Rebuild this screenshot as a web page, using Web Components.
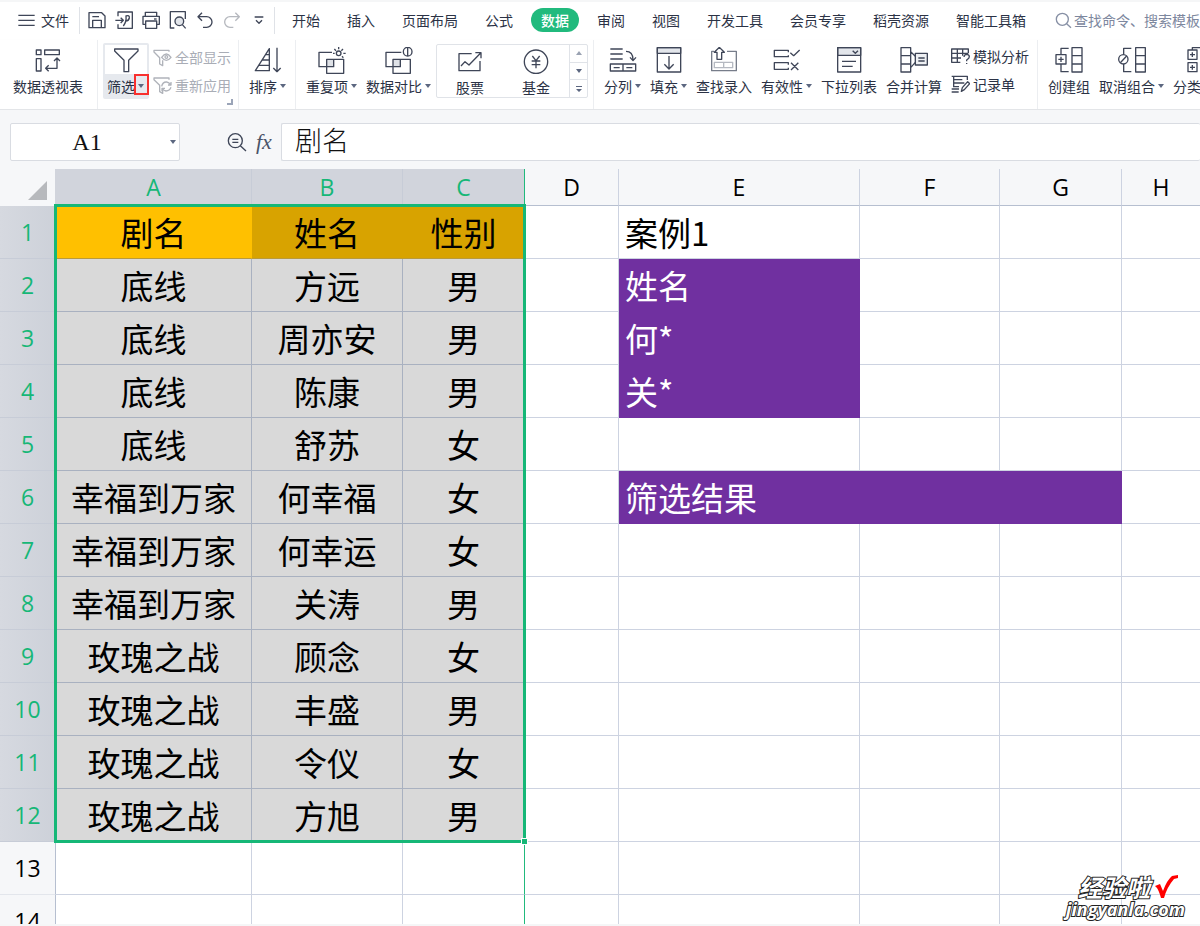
<!DOCTYPE html>
<html lang="zh-CN">
<head>
<meta charset="utf-8">
<title>表格</title>
<style>
  html, body { margin: 0; height: 100%; }
  body { font-family: "Noto Sans CJK SC", sans-serif; font-weight: 400; overflow: hidden; }
</style>
</head>
<body>
<sheet-app></sheet-app>

<template id="t-app">
<style>
  :host { display: flex; flex-direction: column; height: 100vh; overflow: hidden; background: #f5f6f7; color: #2b3245; position: relative; }
  main { flex: 1; min-height: 0; overflow: hidden; margin-bottom: 2px; }
</style>
<menu-bar></menu-bar>
<tool-ribbon></tool-ribbon>
<formula-bar></formula-bar>
<main><sheet-grid></sheet-grid></main>
<site-mark></site-mark>
</template>

<template id="t-menu">
<style>
  :host { display: flex; align-items: center; height: 36px; padding-bottom: 2px; margin-top: 2px; background: #fff; font-size: 14px; line-height: 20px; white-space: nowrap; overflow: hidden; }
  button { font: inherit; color: inherit; background: none; border: 0; padding: 0; display: flex; align-items: center; flex: none; }
  .file { gap: 6px; margin-left: 17px; }
  .sep { width: 1px; height: 27px; background: #dfe2e7; flex: none; }
  .quick { display: flex; gap: 7px; margin: 0 5px 0 7px; }
  .file + .sep { margin-left: 10px; }
  nav { display: flex; gap: 7px; margin-left: 7px; }
  nav a { color: inherit; text-decoration: none; padding: 2px 10px; border-radius: 12px; }
  nav a.on { background: #21ba7d; color: #fff; font-weight: 500; margin: 0 1px; }
  .find { display: flex; align-items: center; gap: 2px; margin-left: 18px; flex: 1; color: #7d879e; }
  .find input { font: inherit; color: inherit; border: 0; padding: 0; outline: 0; background: none; flex: 1; min-width: 124px; }
  .find input::placeholder { color: #7d879e; opacity: 1; }
</style>
<button class="file"><ui-icon name="menu"></ui-icon>文件</button>
<span class="sep"></span>
<div class="quick">
  <button aria-label="保存"><ui-icon name="save"></ui-icon></button>
  <button aria-label="输出"><ui-icon name="export"></ui-icon></button>
  <button aria-label="打印"><ui-icon name="print"></ui-icon></button>
  <button aria-label="打印预览"><ui-icon name="preview"></ui-icon></button>
  <button aria-label="撤销"><ui-icon name="undo"></ui-icon></button>
  <button aria-label="恢复"><ui-icon name="redo"></ui-icon></button>
  <button aria-label="更多"><ui-icon name="more"></ui-icon></button>
</div>
<span class="sep"></span>
<nav>
  <a href="#">开始</a><a href="#">插入</a><a href="#">页面布局</a><a href="#">公式</a><a href="#" class="on">数据</a><a href="#">审阅</a><a href="#">视图</a><a href="#">开发工具</a><a href="#">会员专享</a><a href="#">稻壳资源</a><a href="#">智能工具箱</a>
</nav>
<label class="find"><ui-icon name="search"></ui-icon><input type="text" aria-label="搜索" placeholder="查找命令、搜索模板"></label>
</template>

<template id="t-tool">
<style>
  :host { display: block; flex: none; }
  button { font: inherit; color: inherit; background: none; border: 0; padding: 0; display: flex; flex-direction: column; align-items: center; gap: 1px; white-space: nowrap; }
  .label { display: flex; align-items: center; gap: 3px; line-height: 20px; }
  .caret { display: none; width: 0; height: 0; border: 3px solid transparent; border-top: 4px solid #5c6780; border-bottom: 0; }
  :host([menu]) .caret { display: block; }
  :host([small]) button { flex-direction: row; gap: 3px; }
  :host([disabled]) { color: #a9adb6; }
</style>
<button><ui-icon></ui-icon><span class="label"><slot></slot><span class="caret"></span></span></button>
</template>

<template id="t-ribbon">
<style>
  :host { display: flex; height: 69px; background: #fff; border-bottom: 1px solid #e3e5e8; font-size: 14px; overflow: hidden; box-shadow: 0 1px 2px #e6e8eb; }
  .group { display: flex; align-items: flex-start; gap: 9px; padding: 7px 9px 0 10px; box-sizing: border-box; flex: none; border-right: 1px solid #eceef1; position: relative; }
  .group:last-child { border: 0; }
  .first { padding: 7px 14px 0 13px; }
  .filters { gap: 4px; padding: 3px 7px 0 5px; }
  .filter { box-sizing: border-box; width: 46px; height: 56px; border: 2px solid #e6e9ee; border-radius: 2px; padding: 2px 0 0 2px; background: linear-gradient(#fff 29px, #e6e9ee 29px); position: relative; }
  .mark { position: absolute; right: -2px; bottom: 2px; width: 11px; height: 17px; border: 2px solid #f8302e; }
  .stack { display: flex; flex-direction: column; gap: 8px; }
  .filters .stack { padding-top: 4px; }
  .corner { position: absolute; right: 5px; bottom: 4px; width: 4px; height: 4px; border: solid #9ba5b8; border-width: 0 2px 2px 0; }
  .gallery { box-sizing: border-box; width: 152px; height: 54px; margin: -3px -4px 0 -4px; border: 1px solid #e0e3e8; border-radius: 2px; display: flex; }
  .gallery tool-button { width: 66px; padding-top: 3px; }
  .spin { margin-left: auto; width: 17px; border-left: 1px solid #e0e3e8; display: flex; flex-direction: column; }
  .spin button { flex: 1; border: 0; padding: 0; background: none; display: grid; place-items: center; }
  .spin button + button { border-top: 1px solid #e0e3e8; }
  .data { padding-right: 8px; }
  .data .stack { margin-top: -1px; }
</style>
<div class="group first"><tool-button icon="pivot">数据透视表</tool-button></div>
<div class="group filters">
  <div class="filter"><tool-button icon="filter" menu>筛选</tool-button><span class="mark"></span></div>
  <div class="stack"><tool-button small disabled icon="showall">全部显示</tool-button><tool-button small disabled icon="reapply">重新应用</tool-button></div>
  <span class="corner"></span>
</div>
<div class="group"><tool-button icon="sort" menu>排序</tool-button></div>
<div class="group">
  <tool-button icon="dup" menu>重复项</tool-button>
  <tool-button icon="compare" menu>数据对比</tool-button>
  <div class="gallery">
    <tool-button icon="stock">股票</tool-button>
    <tool-button icon="fund">基金</tool-button>
    <div class="spin">
      <button aria-label="上一行"><svg width="6" height="4"><path d="M0 4L3 0L6 4Z" fill="#9aa2b2"/></svg></button>
      <button aria-label="下一行"><svg width="6" height="4"><path d="M0 0L3 4L6 0Z" fill="#5c6780"/></svg></button>
      <button aria-label="展开"><svg width="6" height="6"><path d="M0 0H6V1H0ZM0 3L3 6L6 3Z" fill="#5c6780"/></svg></button>
    </div>
  </div>
</div>
<div class="group data">
  <tool-button icon="split" menu>分列</tool-button>
  <tool-button icon="fill" menu>填充</tool-button>
  <tool-button icon="lookup">查找录入</tool-button>
  <tool-button icon="valid" menu>有效性</tool-button>
  <tool-button icon="drop">下拉列表</tool-button>
  <tool-button icon="merge">合并计算</tool-button>
  <div class="stack"><tool-button small icon="whatif">模拟分析</tool-button><tool-button small icon="record">记录单</tool-button></div>
</div>
<div class="group">
  <tool-button icon="group">创建组</tool-button>
  <tool-button icon="ungroup" menu>取消组合</tool-button>
  <tool-button icon="subtotal">分类汇总</tool-button>
</div>
</template>

<template id="t-formula">
<style>
  :host { display: flex; align-items: center; height: 38px; padding: 13px 0 8px 10px; background: #f6f7f9; color: #4a5468; }
  .name { position: relative; display: flex; width: 170px; flex: none; }
  input { box-sizing: border-box; height: 38px; width: 100%; border: 1px solid #d9dce2; border-radius: 2px; background: #fff; color: #111; outline: 0; }
  .name input { font: 24px "Liberation Serif", serif; text-align: center; padding: 0 16px 0 0; }
  .name i { position: absolute; right: 4px; top: 17px; border: 3px solid transparent; border-top: 4px solid #5c6780; border-bottom: 0; }
  .value { flex: 1; font: 300 27px "Noto Sans CJK SC", sans-serif; padding: 0 13px 6px; border-right: 0; }
  button { border: 0; background: none; padding: 0; color: inherit; display: flex; }
  .zoom { margin-left: 47px; }
  .fx { font: italic 22px/24px "Liberation Serif", serif; margin: 0 8px 0 9px; width: 17px; }
</style>
<div class="name"><input aria-label="名称框" value="A1"><i></i></div>
<button class="zoom" aria-label="浏览公式"><ui-icon name="lens"></ui-icon></button>
<button class="fx">fx</button>
<input class="value" aria-label="编辑栏" value="剧名">
</template>

<template id="t-grid">
<style>
  :host { display: block; position: relative; background: #fff; }
  table { border-collapse: separate; border-spacing: 0; table-layout: fixed; width: 100%; min-width: 1180px; color: #000; }
  .w0 { width: 56px; } .w1 { width: 196px; } .w2 { width: 151px; } .w3 { width: 122px; } .w4 { width: 94px; } .w5 { width: 241px; } .w6 { width: 140px; } .w7 { width: 122px; }
  th, td { box-sizing: border-box; padding: 0; overflow: hidden; white-space: nowrap; border: solid #cdd3e1; border-width: 0 1px 1px 0; }
  th { background: #f6f7f9; font: 400 23px/30px "Open Sans", "Noto Sans", sans-serif; text-align: center; }
  thead th { height: 37px; border-bottom-color: #b6bfd0; border-right-color: #cdd3e1; }
  thead th:first-child { border-color: #f6f7f9; border-right-color: #d1d4dc; text-align: right; }
  thead th svg { display: block; margin: 6px 8px 0 auto; }
  tbody th { border-color: #e3e6ec; border-right-color: #b6bfd0; }
  th.sel { background: #d1d4dc; color: #16b777; border-color: #c7ccd7; }
  tbody th.sel { background: linear-gradient(90deg, #d6d9e0, #cdd1d9); }
  td { height: 53px; font-size: 33px; line-height: 48px; padding: 2px 0; }
  td:nth-child(n+6) { padding-left: 6px; }
  td.sel { text-align: center; background: #d9d9d9; border-color: #a9b1c0; }
  td.head { background: #d8a300; border-color: #d8a300; border-bottom-color: #b99a3c; }
  td.head.active { background: #ffc000; border-color: #ffc000; border-bottom-color: #b99a3c; }
  td.edge, th.edge { border-right-color: #21ba7d; }
  td.fill { background: #7030a0; border-color: #7030a0; color: #fff; }
  tr > :last-child { border-right: 0; }
  .range { position: absolute; box-sizing: border-box; left: 54px; top: 35px; width: 472px; height: 639px; border: 3px solid #16b777; pointer-events: none; }
  .range::after { content: ""; position: absolute; right: -4px; bottom: -4px; width: 5px; height: 5px; background: #16b777; outline: 1px solid #fff; }
</style>
<table>
  <colgroup><col class="w0"><col class="w1"><col class="w2"><col class="w3"><col class="w4"><col class="w5"><col class="w6"><col class="w7"><col></colgroup>
  <thead></thead><tbody></tbody>
</table>
<div class="range"></div>
</template>

<template id="t-mark">
<style>
  :host { position: absolute; right: 15px; bottom: 7px; width: 126px; color: #fff; -webkit-text-stroke: 2px #222; paint-order: stroke fill; font-style: italic; }
  .top { display: flex; align-items: center; justify-content: flex-end; gap: 4px; padding-right: 6px; height: 24px; }
  b { font-weight: 700; font-size: 24px; line-height: 24px; }
  .url { display: block; font: italic 700 18px/20px "Open Sans", sans-serif; text-align: right; }
</style>
<div class="top"><b>经验啦</b><svg width="25" height="24" viewBox="0 0 25 24"><path d="M1 11L6 9L9 16Q13 5 18 1L24 0V3L20 4Q13 12 10 23H7Q5 16 3 13Z" fill="#f00"/></svg></div>
<span class="url">jingyanla.com</span>
</template>

<script>
const stamp = (host, id) => {
  const root = host.attachShadow({ mode: 'open' });
  root.append(document.getElementById(id).content.cloneNode(true));
  return root;
};

/* name: [size in px, viewBox, shapes] */
const icons = {
  menu: [18, '51 33 54 54', '<path d="M55 46H104M55 61H104M55 76H104"/>'],
  save: [20, '264 33 60 60', '<path d="M270 41H308L318 51V86H270ZM281 86V64H307V86M280 53H300"/>'],
  export: [20, '345 33 60 60', '<path d="M357 52V39H400V88H357V76M349 64H373M365 56L373 64L365 72M373 81Q383 68 381 51Q392 47 391 57Q389 67 378 66"/>'],
  print: [20, '423 33 60 60', '<path d="M436 52V40H470V52M437 76H429V52H478V76H470"/><path d="M437 66H470V88H437Z"/><path d="M462 60H470"/>'],
  preview: [20, '504 33 60 60', '<path d="M523 87H511V38H556V60"/><circle cx="538" cy="67" r="13" fill="#e3e6eb"/><path d="M547 77L557 88"/>'],
  undo: [20, '582 33 60 60', '<path d="M603 41L591 53L603 65M592 53H617A16 16 0 0 1 617 85H606"/>'],
  redo: [20, '664 33 60 60', '<g stroke="#b5b8be"><path d="M704 41L716 53L704 65M715 53H688A16 16 0 0 0 688 85H698"/></g>'],
  more: [20, '746 33 60 60', '<path d="M763 54H789M767 64L776 73L785 64"/>'],
  search: [18, '495 36 54 54', '<g stroke="#8790a5"><circle cx="520" cy="61" r="18"/><path d="M533 74L546 86"/></g>'],
  lens: [20, '681 63 60 60', '<circle cx="706" cy="89" r="21"/><path d="M721 104L738 120M697 85H715M697 94H715"/>'],
  pivot: [28, '99 141 84 84', '<path d="M106 150H120V164H106ZM131 150H175V164H131ZM106 176H120V213H106ZM134 205H168V175M143 196L134 205L143 214M159 183L168 174L177 183"/>'],
  filter: [28, '333 141 84 84', '<path d="M341 147H411V153L383 181V215H369V181L341 153Z"/>'],
  sort: [28, '759 141 84 84', '<path d="M763 212L805 146V212ZM793 164H805M783 180H805M773 196H805M828 143V214M817 204L828 215L839 204"/>'],
  dup: [28, '77 141 84 84', '<rect x="103" y="178" width="21" height="22" fill="#dfe2e7" stroke="none"/><path d="M119 157H80V200H124V176M103 178H154V220H103Z"/><circle cx="139" cy="160" r="7"/><path d="M139 141V148M126 147L131 152M122 160H127M152 147L147 152M153 160H160M149 169L153 173"/>'],
  compare: [28, '283 141 84 84', '<rect x="307" y="178" width="22" height="22" fill="#dfe2e7" stroke="none"/><path d="M332 157H286V200H329V178M307 178H359V220H307ZM351 141V168"/><circle cx="351" cy="155" r="13"/>'],
  stock: [28, '497 143 84 84', '<path d="M544 160H506V211H569V182M512 197L524 184L536 194L571 158M555 157H572V174"/>'],
  fund: [28, '696 143 84 84', '<circle cx="738" cy="184" r="35"/><path d="M727 167L738 181L749 167M738 181V204M725 182H751M725 193H751"/>'],
  split: [28, '56 141 84 84', '<path d="M60 147H97M60 162H97M60 177H97M107 154Q128 154 128 179M119 172L128 182L137 172M60 192H136V213H60ZM98 192V213M70 203H88M108 203H126"/>'],
  fill: [28, '192 141 84 84', '<rect x="199" y="143" width="70" height="17" fill="#e3e6eb"/><path d="M199 143H269V216H199ZM234 168V206M220 193L234 207L248 193"/>'],
  lookup: [28, '363 141 84 84', '<path d="M375 154H368V212H442V154H414" stroke="#777d8a"/><path d="M391 142L406 157H398V178H384V157H376Z"/><path d="M376 187H431V203H376ZM404 187V203" stroke="#b5b9c1"/>'],
  valid: [28, '549 141 84 84', '<path d="M595 157V151H553V170H595V166M595 194V188H553V208H595V203M601 158L611 167L629 150M603 188L625 210M625 188L603 210"/>'],
  drop: [28, '735 141 84 84', '<rect x="743" y="143" width="69" height="23" fill="#e3e6eb"/><path d="M743 143H812V216H743ZM788 152L796 160L804 152M756 184H798M756 199H788"/>'],
  merge: [28, '32 141 84 84', '<rect x="78" y="160" width="36" height="35" fill="#eef0f3"/><path d="M35 143H64V216H35ZM35 167H64M35 192H64M64 155L78 169M64 203L78 187M87 174H106M87 183H106"/>'],
  whatif: [19, '182 142 57 57', '<path d="M210 188H184V148H234V160M184 161H234M184 175H212M201 148V188M217 148V168M221 172Q222 164 229 164Q237 165 237 171Q237 176 229 181V185M229 190V193"/>'],
  record: [19, '182 228 57 57', '<path d="M205 279H184M190 265V232M184 232H231V243M190 242H216M190 252H222M190 263H206M184 270H206M213 277L216 266L232 248L238 254L222 272Z"/>'],
  group: [28, '489 141 84 84', '<path d="M530 145H507V164M507 192V215H530M492 164H522V192H492ZM499 178H515M507 170V186M540 143H570V216H540ZM540 167H570M540 192H570"/>'],
  ungroup: [28, '680 141 84 84', '<path d="M720 145H697V164M697 192V215H720M687 188L706 168M733 143H762V216H733ZM733 167H762M733 192H762"/><circle cx="696" cy="178" r="14"/>'],
  subtotal: [28, '891 141 84 84', '<path d="M930 143H907V150M894 150H921V178H894ZM894 188H921V215H894ZM900 164H915M907 157V171M900 202H915M907 195V209M940 143H970V216H940ZM940 167H970M940 192H970"/>'],
  showall: [19, '458 141 57 57', '<g stroke="#b0b3ba"><path d="M506 152V148H461V153L478 170V189L487 194V178"/><path d="M484 169Q498 149 512 169Q498 187 484 169Z"/><circle cx="498" cy="168" r="4"/></g>'],
  reapply: [19, '458 227 57 57', '<g stroke="#b0b3ba"><path d="M506 238V233H461V238L478 255V274L487 279V266"/><path d="M484 258Q487 244 499 245Q506 246 511 253M512 245V254H503M512 261Q508 272 497 272Q490 271 486 265M485 273V264H494"/></g>']
};

customElements.define('ui-icon', class extends HTMLElement {
  static observedAttributes = ['name'];
  constructor() { super(); this.attachShadow({ mode: 'open' }); }
  attributeChangedCallback() {
    const [size, box, shapes] = icons[this.getAttribute('name')];
    this.shadowRoot.innerHTML = `<style>:host{display:block;flex:none}svg{display:block;fill:none;stroke:#3f4658;stroke-width:4;stroke-linejoin:round}</style>
      <svg width="${size}" height="${size}" viewBox="${box}" aria-hidden="true">${shapes}</svg>`;
  }
});

customElements.define('tool-button', class extends HTMLElement {
  constructor() {
    super();
    stamp(this, 't-tool');
  }
  connectedCallback() {
    this.shadowRoot.querySelector('ui-icon').setAttribute('name', this.getAttribute('icon'));
    if (this.closest('.gallery')) this.shadowRoot.querySelector('button').style.width = '100%';
  }
});

const simple = { 'menu-bar': 't-menu', 'tool-ribbon': 't-ribbon', 'formula-bar': 't-formula', 'site-mark': 't-mark' };
for (const [tag, id] of Object.entries(simple)) {
  customElements.define(tag, class extends HTMLElement {
    constructor() { super(); stamp(this, id); }
  });
}

const people = [
  ['剧名', '姓名', '性别'], ['底线', '方远', '男'], ['底线', '周亦安', '男'], ['底线', '陈康', '男'],
  ['底线', '舒苏', '女'], ['幸福到万家', '何幸福', '女'], ['幸福到万家', '何幸运', '女'], ['幸福到万家', '关涛', '男'],
  ['玫瑰之战', '顾念', '女'], ['玫瑰之战', '丰盛', '男'], ['玫瑰之战', '令仪', '女'], ['玫瑰之战', '方旭', '男']
];
const notes = { E1: '案例1', E2: '姓名', E3: '何*', E4: '关*', E6: '筛选结果' };
const filled = new Set(['E2', 'E3', 'E4', 'E6', 'F6', 'G6']);

customElements.define('sheet-grid', class extends HTMLElement {
  constructor() {
    super();
    const root = stamp(this, 't-grid');
    const cols = [...'ABCDEFGH'];
    root.querySelector('thead').innerHTML = '<tr><th aria-label="全选"><svg width="19" height="19"><path d="M19 0V19H0Z" fill="#b7b9bd"/></svg></th>' +
      cols.map((c, i) => `<th scope="col" class="${i < 3 ? 'sel' : ''} ${i === 2 ? 'edge' : ''}">${c}</th>`).join('') + '</tr>';
    let html = '';
    for (let r = 1; r <= 14; r++) {
      const row = people[r - 1];
      html += `<tr><th scope="row" class="${row ? 'sel' : ''}">${r}</th>` + cols.map((c, i) => {
        const cls = [];
        if (row && i < 3) cls.push('sel');
        if (r === 1 && i < 3) cls.push('head');
        if (r === 1 && i === 0) cls.push('active');
        if (i === 2) cls.push('edge');
        if (filled.has(c + r)) cls.push('fill');
        return `<td class="${cls.join(' ')}">${(i < 3 ? row && row[i] : notes[c + r]) || ''}</td>`;
      }).join('') + '</tr>';
    }
    root.querySelector('tbody').innerHTML = html;
  }
});

customElements.define('sheet-app', class extends HTMLElement {
  constructor() { super(); stamp(this, 't-app'); }
});
</script>
</body>
</html>
